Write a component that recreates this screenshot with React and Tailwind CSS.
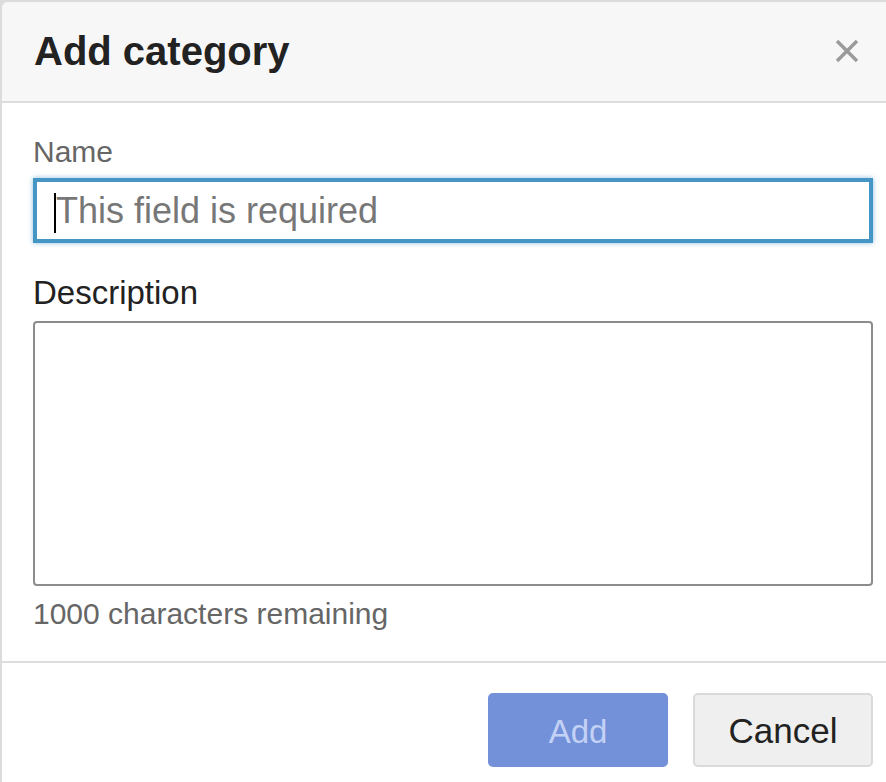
import React from 'react';

const CloseIcon = () => (
  <svg width="24" height="24" viewBox="0 0 24 24" fill="none" stroke="#9a9a9a" strokeWidth="3.4" strokeLinecap="butt">
    <line x1="2" y1="2" x2="22" y2="22" />
    <line x1="22" y1="2" x2="2" y2="22" />
  </svg>
);

const App = () => {
  return (
    <div className="h-[782px] w-full overflow-hidden bg-[#dcdcdc] pt-[2px] pl-[2px] font-['Liberation_Sans',Arial,sans-serif]">
      <div className="w-[902px] h-[800px] bg-white rounded-tl-[6px] overflow-hidden">
        {/* Header */}
        <div className="h-[101px] bg-[#f7f7f7] border-b-2 border-[#dddddd] pl-[32px] pr-[45px] flex items-center justify-between">
          <h1 className="text-[40px] leading-[48px] font-bold text-[#222222] -mt-[2px]">Add category</h1>
          <button className="w-[24px] h-[24px] flex items-center justify-center -mt-[2px]">
            <CloseIcon />
          </button>
        </div>

        {/* Body */}
        <div className="px-[31px] pt-[32px] pb-[30px] border-b-2 border-[#dddddd]">
          <label className="block text-[30px] leading-[34px] text-[#666666]">Name</label>
          <div className="mt-[9px] h-[65px] border-[4px] border-[#4596c4] shadow-[0_0_5px_rgba(69,150,196,0.6)] flex items-center pl-[18px] relative">
            <span className="absolute left-[17px] top-[11px] w-[2px] h-[40px] bg-black" />
            <input
              className="w-full h-full outline-none bg-transparent text-[36px] text-[#222222] placeholder:text-[#777777] pl-[1px]"
              placeholder="This field is required"
            />
          </div>

          <label className="block mt-[31px] text-[33px] leading-[37px] text-[#222222]">Description</label>
          <textarea className="mt-[10px] block w-full h-[265px] border-2 border-[#8c8c8c] rounded-[4px] outline-none resize-none" />
          <p className="mt-[11px] text-[30px] leading-[34px] text-[#666666]">1000 characters remaining</p>
        </div>

        {/* Footer */}
        <div className="pt-[30px] px-[31px] flex justify-end gap-[25px]">
          <button className="w-[180px] h-[74px] rounded-[5px] bg-[#7391d9] text-[#c3d1f5] text-[33px] pt-[3px]">Add</button>
          <button className="w-[180px] h-[74px] rounded-[5px] bg-[#efefef] border-2 border-[#dadada] text-[#222222] text-[35px] pt-[3px]">Cancel</button>
        </div>
      </div>
    </div>
  );
};

export default App;
